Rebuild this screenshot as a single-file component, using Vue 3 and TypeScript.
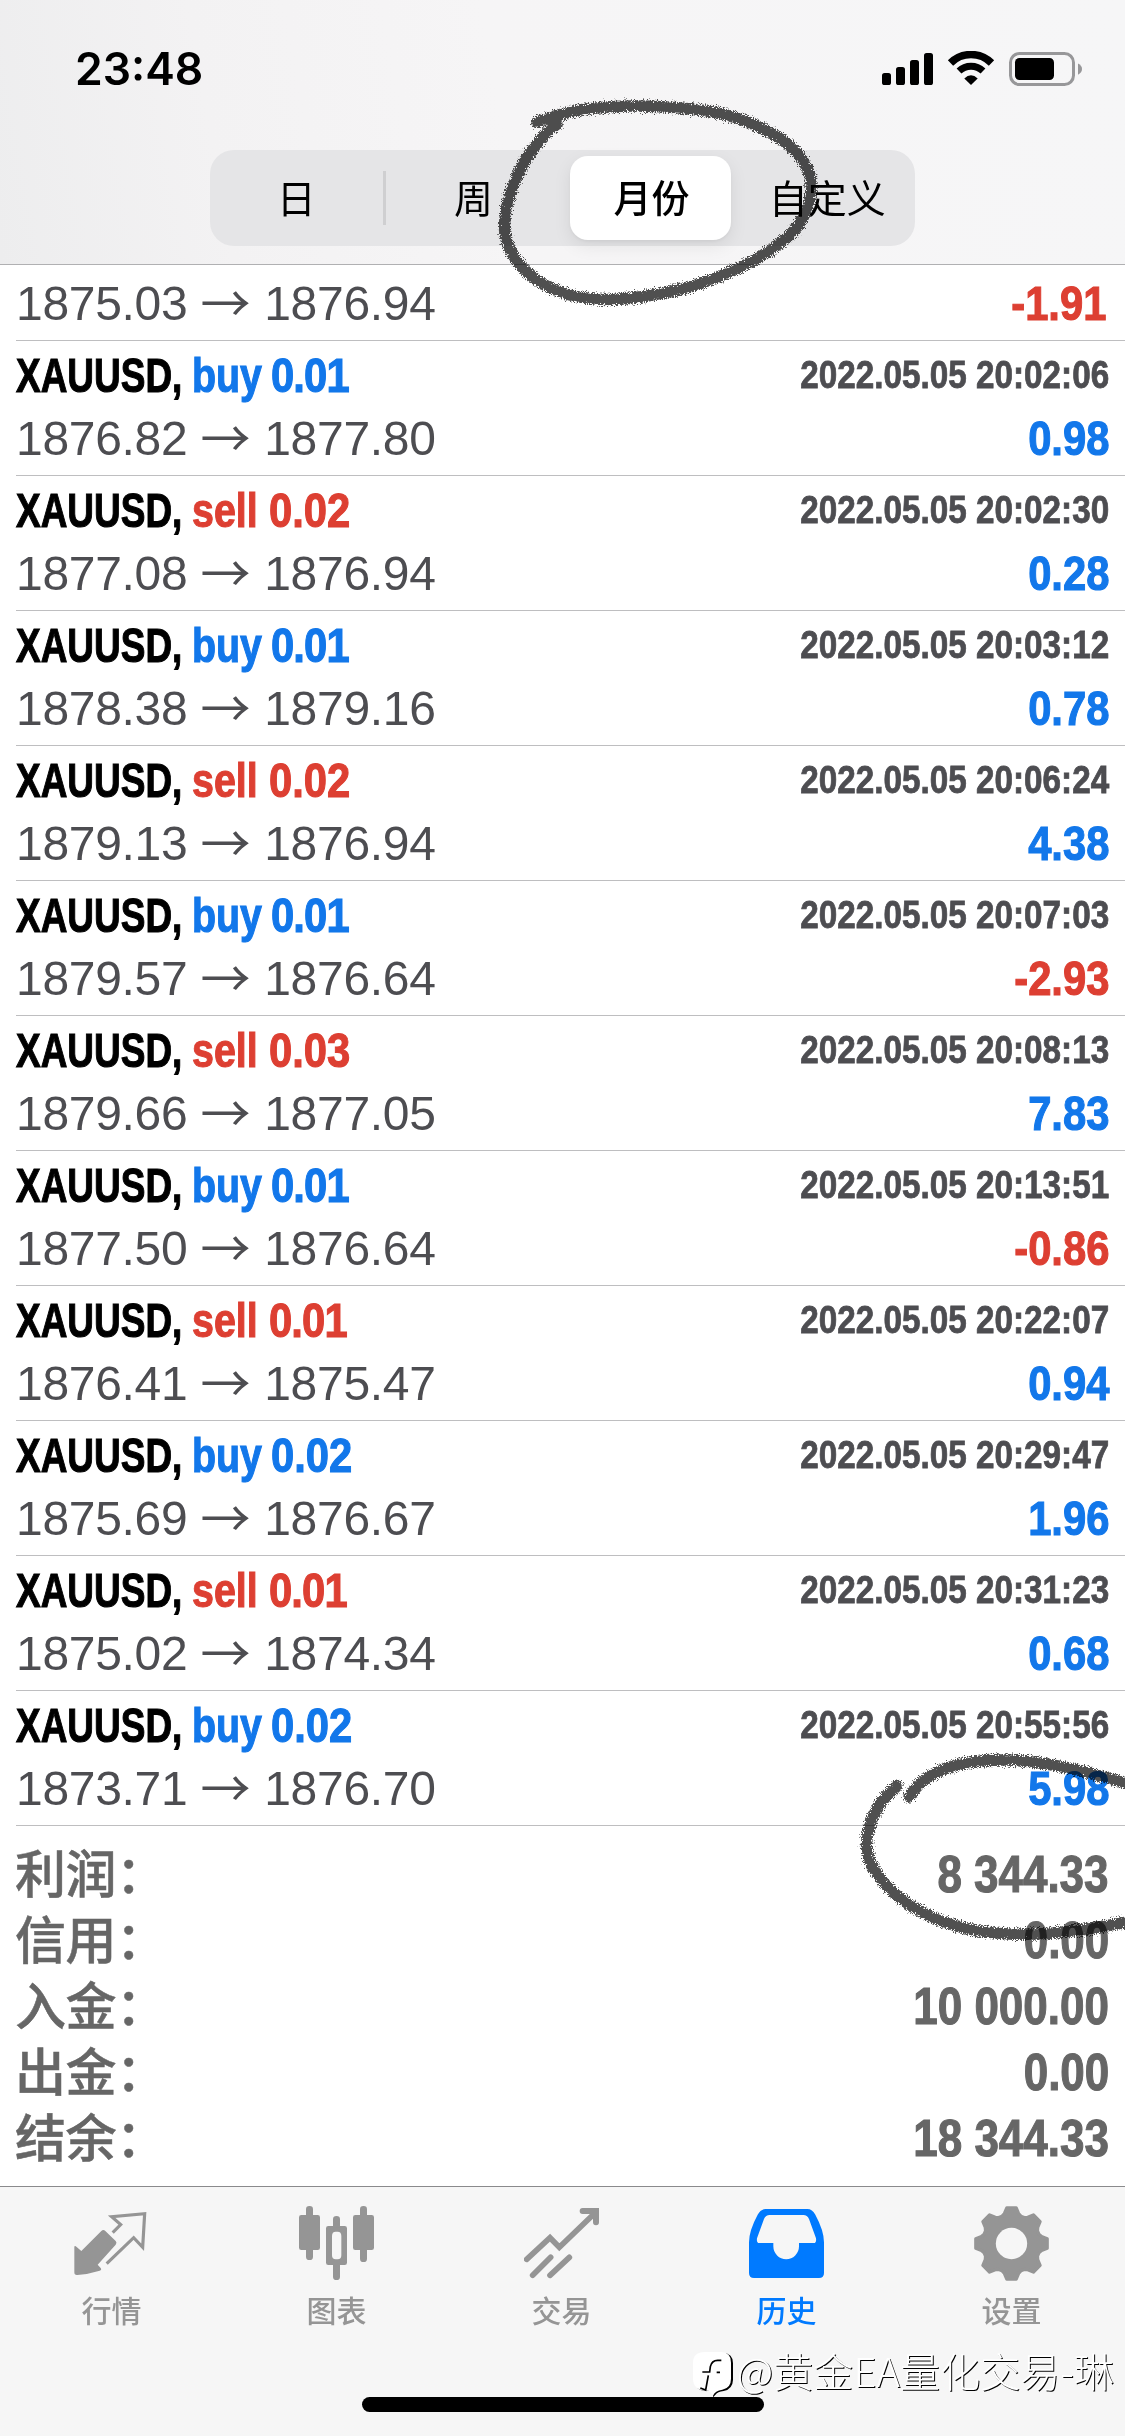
<script setup lang="ts">
interface Deal {
  side: 'buy' | 'sell'
  volume: string
  time: string
  open: string
  close: string
  profit: string
}

type Point = [number, number]

const deal = (side: 'buy' | 'sell', volume: string, clock: string, open: string, close: string, profit: string): Deal => ({
  side,
  volume,
  time: `2022.05.05 ${clock}`,
  open,
  close,
  profit,
})

const deals: Deal[] = [
  deal('buy', '0.01', '20:02:06', '1876.82', '1877.80', '0.98'),
  deal('sell', '0.02', '20:02:30', '1877.08', '1876.94', '0.28'),
  deal('buy', '0.01', '20:03:12', '1878.38', '1879.16', '0.78'),
  deal('sell', '0.02', '20:06:24', '1879.13', '1876.94', '4.38'),
  deal('buy', '0.01', '20:07:03', '1879.57', '1876.64', '-2.93'),
  deal('sell', '0.03', '20:08:13', '1879.66', '1877.05', '7.83'),
  deal('buy', '0.01', '20:13:51', '1877.50', '1876.64', '-0.86'),
  deal('sell', '0.01', '20:22:07', '1876.41', '1875.47', '0.94'),
  deal('buy', '0.02', '20:29:47', '1875.69', '1876.67', '1.96'),
  deal('sell', '0.01', '20:31:23', '1875.02', '1874.34', '0.68'),
  deal('buy', '0.02', '20:55:56', '1873.71', '1876.70', '5.98'),
]

const totals = [
  { label: '利润：', value: '8 344.33' },
  { label: '信用：', value: '0.00' },
  { label: '入金：', value: '10 000.00' },
  { label: '出金：', value: '0.00' },
  { label: '结余：', value: '18 344.33' },
]

const segments = ['日', '周', '月份', '自定义']

const tabs = [
  { id: 'quotes', label: '行情' },
  { id: 'charts', label: '图表' },
  { id: 'trade', label: '交易' },
  { id: 'history', label: '历史' },
  { id: 'settings', label: '设置' },
]

/* Catmull-Rom spline through the pen points. */
function spline(p: Point[]): string {
  let d = `M${p[0][0]} ${p[0][1]}`
  for (let i = 0; i < p.length - 1; i++) {
    const a = p[Math.max(i - 1, 0)]
    const b = p[i]
    const c = p[i + 1]
    const e = p[Math.min(i + 2, p.length - 1)]
    d += ` C${b[0] + (c[0] - a[0]) / 6} ${b[1] + (c[1] - a[1]) / 6} ${c[0] - (e[0] - b[0]) / 6} ${c[1] - (e[1] - b[1]) / 6} ${c[0]} ${c[1]}`
  }
  return d
}

const strokes = [
  spline([
    [537, 121], [556, 115], [580, 109], [608, 106], [637, 105], [680, 107], [720, 112.5], [757, 125], [790, 145],
    [807, 167], [811, 187], [805, 213], [787, 236.5], [747, 263], [693, 285], [647, 295], [607, 298.5],
    [570, 294], [540, 281], [517, 260], [505, 233], [509, 197], [525, 160], [542, 137], [557, 123],
  ]),
  spline([[909, 1796], [923, 1780], [947, 1767], [973, 1761], [1007, 1759], [1047, 1763], [1087, 1771.5], [1125, 1782], [1145, 1789]]),
  spline([
    [897, 1785], [880, 1803], [869, 1827], [867, 1850], [877, 1873], [900, 1897], [933, 1916.5], [973, 1929],
    [1010, 1933], [1047, 1932.5], [1087, 1928], [1125, 1921.5], [1145, 1917],
  ]),
]

/* Eight-tooth gear: each tooth is [offset along the rim, radius]. */
const tooth: Point[] = [[-28, 82], [-21, 90], [-14, 107], [14, 107], [21, 90], [28, 82]]
const gear = `M${Array.from({ length: 8 }, (_, i) => {
  const t = (i * Math.PI) / 4
  return tooth
    .map(([x, r]) => `${(112.5 + x * Math.cos(t) + r * Math.sin(t)).toFixed(1)} ${(112.5 + x * Math.sin(t) - r * Math.cos(t)).toFixed(1)}`)
    .join('L')
}).join('L')}Z`
</script>

<template>
  <div class="screen">
    <header class="top">
      <div class="status">
        <span class="clock">23:48</span>
        <svg class="status-icons" viewBox="0 0 201 36" width="201" height="36">
          <rect x="0" y="22" width="9" height="12" rx="2.6" />
          <rect x="14" y="16" width="9" height="18" rx="2.6" />
          <rect x="28" y="9" width="9" height="25" rx="2.6" />
          <rect x="42" y="2" width="9" height="32" rx="2.6" />
          <g fill="none" stroke="#000">
            <path d="M68.500 12A29 29 0 0 1 109.500 12" stroke-width="7.5" />
            <path d="M77 20A17.500 17.500 0 0 1 101 20" stroke-width="7" />
          </g>
          <path d="M89 34L82.300 27.500Q89 21 95.700 27.500Z" />
          <rect x="128.500" y="2.500" width="63" height="31" rx="9" fill="none" stroke="#979799" stroke-width="3" />
          <rect x="133" y="7" width="39" height="22" rx="4.5" />
          <path d="M196 12.500Q200 14.500 200 18T196 23.800Z" fill="#979799" />
        </svg>
      </div>
      <nav class="segmented">
        <div v-for="(name, i) in segments" :key="name" class="segment" :class="{ active: i === 2, divided: i === 0 }">
          <span>{{ name }}</span>
        </div>
      </nav>
    </header>

    <main class="list">
      <section class="row first">
        <div class="line prices">
          <span class="price">1875.03 <i>→</i> 1876.94</span>
          <b class="profit loss ends-one">-1.91</b>
        </div>
      </section>
      <section v-for="d in deals" :key="d.time" class="row">
        <div class="line title">
          <b class="symbol">XAUUSD,</b>
          <b class="side" :class="d.side">{{ d.side }}</b>
          <b class="volume" :class="[d.side, { 'ends-one': d.volume.endsWith('1') }]">{{ d.volume }}</b>
          <b class="time">{{ d.time }}</b>
        </div>
        <div class="line prices">
          <span class="price">{{ d.open }} <i>→</i> {{ d.close }}</span>
          <b class="profit" :class="{ loss: d.profit.startsWith('-') }">{{ d.profit }}</b>
        </div>
      </section>
      <section class="totals">
        <div v-for="t in totals" :key="t.label" class="total">
          <span class="label">{{ t.label }}</span>
          <b class="value">{{ t.value }}</b>
        </div>
      </section>
    </main>

    <footer class="bottom">
      <nav class="tabs">
        <div v-for="tab in tabs" :key="tab.id" class="tab" :class="{ current: tab.id === 'history' }">
          <svg viewBox="0 0 225 225" width="75" height="75" fill="currentColor">
            <g v-if="tab.id === 'quotes'">
              <path d="M1 124Q1 117 8 123L22 135L82 75Q88 69 94 75L125 105Q130 110 125 116L71 176L80 186Q84 192 77 194Q45 204 10 207Q1 208 1 199Z" />
              <path d="M116 80L140 56L113 32L212 23L206 124L179 95L98 173" fill="none" stroke="currentColor" stroke-width="9.5" />
            </g>
            <g v-else-if="tab.id === 'charts'">
              <rect x="0" y="27" width="63" height="105" rx="7" />
              <rect x="21" y="0" width="21" height="162" rx="10" />
              <path fill-rule="evenodd" d="M88 60H137Q144 60 144 67V170Q144 177 137 177H88Q81 177 81 170V67Q81 60 88 60ZM110 77Q99 77 99 90V148Q99 160 110 160H116Q127 160 127 148V90Q127 77 116 77Z" />
              <path d="M102 64V40Q102 30 112.500 30T123 40V64ZM102 174V212Q102 222 112.500 222T123 212V174Z" />
              <rect x="162" y="27" width="63" height="105" rx="7" />
              <rect x="183" y="0" width="21" height="168" rx="10" />
            </g>
            <g v-else-if="tab.id === 'trade'" fill="none" stroke="currentColor" stroke-width="17" stroke-linecap="round">
              <path d="M8 160L78 95L106 124L212 22" />
              <path d="M176 15H216V49" stroke-width="18" />
              <path d="M26 208L80 154M78 208L136 154" />
            </g>
            <path
              v-else-if="tab.id === 'history'"
              transform="translate(0 9)"
              fill-rule="evenodd"
              d="M50 0H175Q190 0 199 17Q225 65 225 100V192Q225 207 210 207H15Q0 207 0 192V100Q0 65 26 17Q35 0 50 0ZM62 18H163Q175 18 180 30L201 88Q203 102 194 102H150V112A38.500 38.500 0 0 1 73 112V102H31Q22 102 24 88L45 30Q50 18 62 18Z"
            />
            <g v-else>
              <path :d="gear" stroke="currentColor" stroke-width="10" stroke-linejoin="round" />
              <circle cx="112.500" cy="112.500" r="47" fill="#f6f6f6" />
            </g>
          </svg>
          <span>{{ tab.label }}</span>
        </div>
      </nav>
      <div class="home-bar"></div>
      <div class="watermark">
        <svg viewBox="0 0 126 138" width="42" height="46">
          <path d="M36 3H90Q120 4 120 34V84Q119 112 92 117Q74 118 66 130L60 136V116H36Q14 116 10 100L12 34Q12 3 36 3Z" fill="#000" />
          <path d="M36 0H84Q114 0 114 32V80Q114 108 88 113Q66 116 60 131Q54 120 46 116H36Q0 112 0 80V32Q0 0 36 0Z" fill="#fff" />
          <path d="M85 25H74Q56 25 52 44L50 60H28M46 70L38 114L22 108M71 61H81" fill="none" stroke="#000" stroke-width="5" />
        </svg>
        <span>@黄金EA量化交易-琳</span>
      </div>
    </footer>

    <svg class="ink" viewBox="0 0 1125 2436" width="1125" height="2436">
      <filter id="rough" filterUnits="userSpaceOnUse" x="0" y="0" width="1125" height="2436" color-interpolation-filters="sRGB">
        <feTurbulence type="fractalNoise" baseFrequency="0.9" numOctaves="2" seed="4" result="n" />
        <feDisplacementMap in="SourceGraphic" in2="n" scale="9" xChannelSelector="R" yChannelSelector="G" />
      </filter>
      <g filter="url(#rough)" fill="none" stroke="#505050" stroke-width="11.5" stroke-linecap="round" stroke-linejoin="round">
        <path v-for="(d, i) in strokes" :key="i" :d="d" />
      </g>
    </svg>
  </div>
</template>

<style>
body {
  margin: 0;
  background: #fff;
}
</style>

<style scoped>
.screen {
  position: relative;
  box-sizing: border-box;
  width: 1125px;
  height: 2436px;
  overflow: hidden;
  display: flex;
  flex-direction: column;
  background: #fff;
  font-family: 'Liberation Sans', 'Noto Sans CJK SC', sans-serif;
}
.top {
  box-sizing: border-box;
  height: 265px;
  border-bottom: 1px solid #b0b0b2;
  background: linear-gradient(80deg, #ededee 0%, #f3f2f3 20%, #f6f5f6 45%, #f6f6f7 100%);
}
.status {
  box-sizing: border-box;
  height: 150px;
  padding: 51px 42px 0 75px;
  display: flex;
  justify-content: space-between;
  align-items: flex-start;
}
.clock {
  font: 600 44.5px/36px Inter, sans-serif;
}
.segmented {
  width: 705px;
  height: 96px;
  margin-left: 210px;
  border-radius: 24px;
  background: #e5e5e7;
  display: flex;
}
.segment {
  box-sizing: border-box;
  width: 176px;
  display: flex;
  align-items: center;
  justify-content: center;
  font: 400 39px/60px 'Noto Sans CJK SC', sans-serif;
  color: #000;
}
.segment span {
  margin-top: -5px;
}
.segment.divided {
  margin: 21px 0;
  border-right: 3px solid #cfcfd1;
}
.segment.active {
  width: 162px;
  margin: 6px 8px;
  padding-left: 2px;
  border-radius: 18px;
  background: #fff;
  box-shadow: 0 6px 18px rgba(0, 0, 0, 0.08), 0 2px 3px rgba(0, 0, 0, 0.04);
  font-size: 38px;
  font-weight: 500;
}
.list {
  flex: 1;
}
.row {
  margin-left: 16px;
  padding: 0 16px 8px 0;
  border-bottom: 1px solid #bebec0;
}
.row.first {
  padding-top: 10px;
}
.line {
  display: flex;
  align-items: flex-start;
}
/* Condensed bold: squeezed glyphs with a thin outline that restores the stem weight. */
.line b,
.value {
  flex: none;
  font-weight: 700;
  white-space: nowrap;
  transform-origin: left center;
  -webkit-text-stroke: 1.1px currentColor;
}
.title {
  height: 69px;
  line-height: 69px;
  font-size: 48px;
}
.line .symbol {
  width: 216px;
  margin-right: -40px;
  transform: scaleX(0.77);
}
.line .side {
  transform: scaleX(0.82);
}
.side.buy {
  width: 85px;
  margin-right: -6px;
}
.side.sell {
  width: 80px;
  margin-right: -3px;
}
.line .volume {
  transform: scaleX(0.87);
}
.line .volume.ends-one {
  letter-spacing: -1px;
}
.buy {
  color: #1277ea;
}
.sell {
  color: #dd3f32;
}
.line .time {
  margin-left: auto;
  font-size: 39px;
  line-height: 68px;
  color: #4d4d51;
  transform: scaleX(0.853);
  transform-origin: right center;
  -webkit-text-stroke-width: 0.8px;
}
.prices {
  height: 57px;
  line-height: 57px;
  font-size: 48px;
  justify-content: space-between;
}
.price {
  color: #4d4d51;
  letter-spacing: -0.3px;
}
.price i {
  position: relative;
  top: 1.5px;
  margin: 0 1px 0 0;
  font-family: 'Noto Sans CJK SC', sans-serif;
  font-style: normal;
  font-size: 50px;
  line-height: 1px;
}
.line .profit {
  color: #1277ea;
  transform: scaleX(0.87);
  transform-origin: right center;
}
.line .profit.ends-one {
  margin-right: 3px;
}
.line .profit.loss {
  color: #dd3f32;
}
.totals {
  padding: 16px 16px 0;
}
.total {
  height: 66px;
  display: flex;
  justify-content: space-between;
  line-height: 66px;
  font-size: 51px;
  color: #666;
}
.label {
  margin: -4px 0 0 -1px;
  font-family: 'Noto Sans CJK SC', sans-serif;
  font-weight: 500;
  letter-spacing: -0.5px;
  -webkit-text-stroke: 0.5px currentColor;
}
.value {
  transform: scaleX(0.862);
  transform-origin: right center;
}
.bottom {
  position: relative;
  box-sizing: border-box;
  height: 250px;
  border-top: 1px solid #8a8a8c;
  background: #f6f6f6;
}
.tabs {
  display: flex;
  margin-left: -1px;
  padding-top: 19px;
}
.tab {
  width: 225px;
  display: flex;
  flex-direction: column;
  align-items: center;
  color: #959595;
  font: 500 30px/44px 'Noto Sans CJK SC', sans-serif;
}
.tab span {
  margin-top: 6px;
}
.tab.current {
  color: #007aff;
}
.home-bar {
  position: absolute;
  left: 362px;
  bottom: 24px;
  width: 402px;
  height: 15px;
  border-radius: 8px;
  background: #000;
}
.watermark {
  position: absolute;
  right: 11px;
  bottom: 38px;
  display: flex;
  align-items: center;
  gap: 2px;
  font: 300 40px/46px 'Noto Sans CJK SC', sans-serif;
  letter-spacing: 0.1px;
  color: #fff;
  text-shadow: 1px 1px 0 #000;
  white-space: nowrap;
}
.watermark span {
  margin-top: -10px;
}
.ink {
  position: absolute;
  left: 0;
  top: 1px;
  mix-blend-mode: multiply;
  pointer-events: none;
}
</style>
